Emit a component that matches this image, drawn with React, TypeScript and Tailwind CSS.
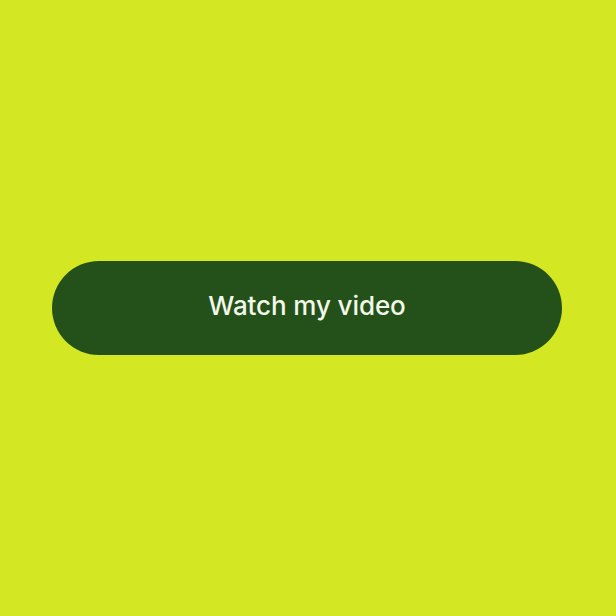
export default function App() {
  return (
    <div className="flex h-[616px] w-[616px] items-center justify-center bg-[#d3e823]">
      <button
        type="button"
        className="ml-[-2px] mt-[-1px] flex h-[94px] w-[510px] items-center justify-center rounded-full bg-[#24511a] pb-[4px] text-[26px] font-medium tracking-[-0.1px] text-[#f3f7ea]"
        style={{ fontFamily: "Inter, 'Noto Sans', sans-serif" }}
      >
        Watch my video
      </button>
    </div>
  );
}
